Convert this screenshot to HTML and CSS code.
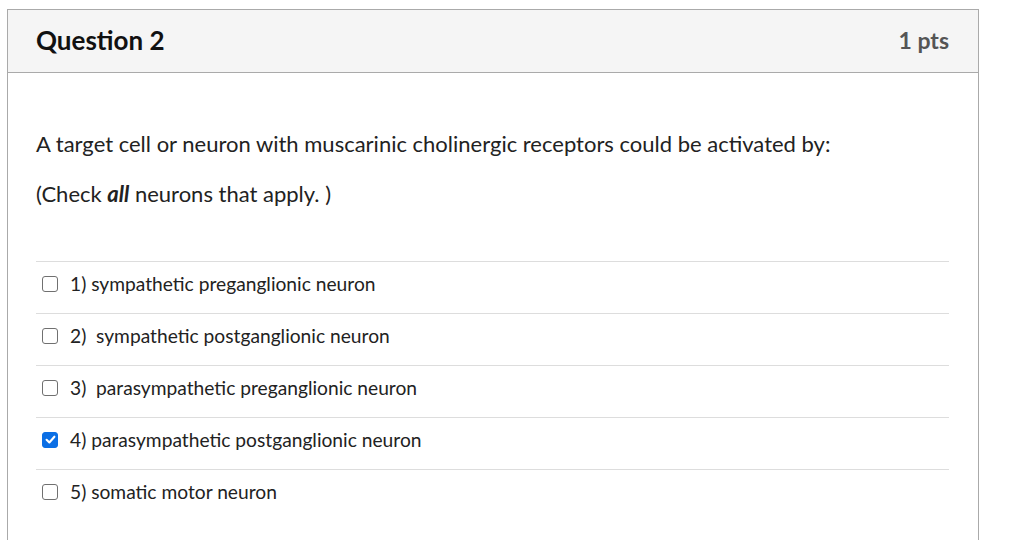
FILE: index.html
```html
<!DOCTYPE html>
<html>
<head>
<meta charset="utf-8">
<link rel="stylesheet" href="styles.css">
</head>
<body>
<div class="quiz">
  <div class="header">
    <h2 class="title">Question 2</h2>
    <div class="pts">1 pts</div>
  </div>
  <div class="content">
    <p class="qtext">A target cell or neuron with muscarinic cholinergic receptors could be activated by:</p>
    <p class="qtext second">(Check <b><i>all</i></b> neurons that apply. )</p>
    <div class="answers">
      <label class="answer"><span class="box"></span><span class="atext">1) sympathetic preganglionic neuron</span></label>
      <label class="answer"><span class="box"></span><span class="atext">2)&nbsp; sympathetic postganglionic neuron</span></label>
      <label class="answer"><span class="box"></span><span class="atext">3)&nbsp; parasympathetic preganglionic neuron</span></label>
      <label class="answer"><span class="box checked"><svg viewBox="0 0 16 16" width="13" height="13"><path d="M3.2 8.4 L6.6 11.6 L12.8 4.6" fill="none" stroke="#fff" stroke-width="2.6" stroke-linecap="round" stroke-linejoin="round"/></svg></span><span class="atext">4) parasympathetic postganglionic neuron</span></label>
      <label class="answer"><span class="box"></span><span class="atext">5) somatic motor neuron</span></label>
    </div>
  </div>
</div>
</body>
</html>
```
FILE: styles.css
```css
* { box-sizing: border-box; }
html, body { margin: 0; padding: 0; background: #fff; }
body { font-family: Lato, "Open Sans", sans-serif; color: #2d3b45; }
.quiz {
  margin: 9px 0 0 7px;
  width: 972px;
  height: 540px;
  border: 1px solid #aaa;
  border-bottom: none;
}
.header {
  height: 63px;
  background: #f5f5f5;
  border-bottom: 1px solid #aaa;
  display: flex;
  align-items: center;
  justify-content: space-between;
  padding: 0 29px 3px 28px;
}
.title {
  margin: 0;
  font-size: 26px;
  font-weight: 700;
  color: #111;
}
.pts {
  font-size: 23px;
  font-weight: 700;
  color: #555;
}
.content { padding: 0 29px 0 28px; }
.qtext {
  margin: 0;
  font-size: 22px;
  color: #222;
  line-height: 28px;
}
.qtext:first-child { padding-top: 57px; }
.second { margin-top: 22px; }
.answers { margin-top: 53px; }
.answer {
  display: flex;
  align-items: center;
  height: 52px;
  padding-bottom: 8px;
  border-top: 1px solid #ddd;
  font-size: 19.2px;
  color: #222;
}
.box {
  flex: none;
  width: 16px;
  height: 16px;
  border: 1.5px solid #707070;
  border-radius: 3px;
  margin: 0 12px 0 6px;
  display: inline-flex;
  align-items: center;
  justify-content: center;
  background: #fff;
}
.box.checked { background: #0b6fe5; border-color: #0b6fe5; }
```
